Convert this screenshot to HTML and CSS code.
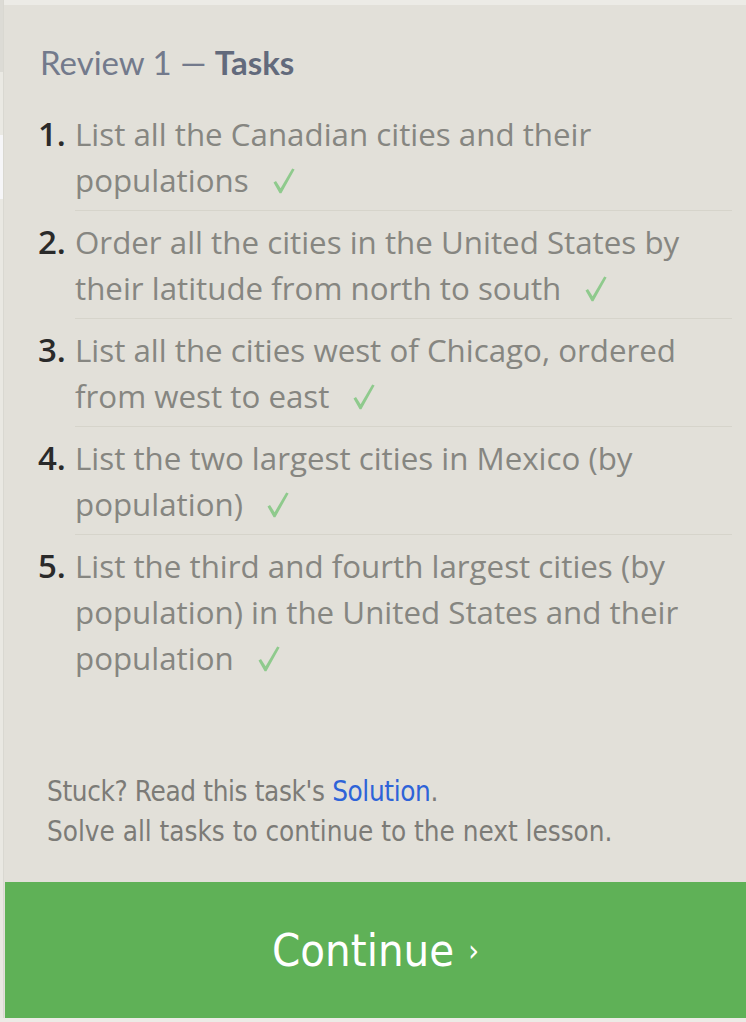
FILE: index.html
```html
<!DOCTYPE html>
<html lang="en">
<head>
<meta charset="utf-8">
<title>Review 1 — Tasks</title>
<link rel="stylesheet" href="styles.css">
</head>
<body>
<div class="page">
  <div class="rail">
    <div class="rail-a"></div>
    <div class="rail-b"></div>
    <div class="rail-c"></div>
    <div class="rail-d"></div>
  </div>
  <main class="panel">
    <h2 class="title">Review 1 — <strong>Tasks</strong></h2>
    <ol class="tasks">
      <li class="task"><span class="num">1.</span><div class="body">List all the Canadian cities and their populations<svg class="check" viewBox="0 0 22 26" width="22" height="26"><path d="M0.5 14.5 L3 13 L7.6 20.2 L19.2 0.6 L21.6 1.6 L8.4 25.2 L6.6 25.2 Z"/></svg></div></li>
      <li class="task"><span class="num">2.</span><div class="body">Order all the cities in the United States by their latitude from north to south<svg class="check" viewBox="0 0 22 26" width="22" height="26"><path d="M0.5 14.5 L3 13 L7.6 20.2 L19.2 0.6 L21.6 1.6 L8.4 25.2 L6.6 25.2 Z"/></svg></div></li>
      <li class="task"><span class="num">3.</span><div class="body">List all the cities west of Chicago, ordered from west to east<svg class="check" viewBox="0 0 22 26" width="22" height="26"><path d="M0.5 14.5 L3 13 L7.6 20.2 L19.2 0.6 L21.6 1.6 L8.4 25.2 L6.6 25.2 Z"/></svg></div></li>
      <li class="task"><span class="num">4.</span><div class="body">List the two largest cities in Mexico (by population)<svg class="check" viewBox="0 0 22 26" width="22" height="26"><path d="M0.5 14.5 L3 13 L7.6 20.2 L19.2 0.6 L21.6 1.6 L8.4 25.2 L6.6 25.2 Z"/></svg></div></li>
      <li class="task"><span class="num">5.</span><div class="body">List the third and fourth largest cities (by population) in the United States and their population<svg class="check" viewBox="0 0 22 26" width="22" height="26"><path d="M0.5 14.5 L3 13 L7.6 20.2 L19.2 0.6 L21.6 1.6 L8.4 25.2 L6.6 25.2 Z"/></svg></div></li>
    </ol>
    <div class="help">
      <p class="stuck">Stuck? Read this task's <a href="#" class="link">Solution</a>.</p>
      <p>Solve all tasks to continue to the next lesson.</p>
    </div>
    <a href="#" class="continue">Continue <span class="chev">›</span></a>
  </main>
</div>
</body>
</html>
```
FILE: styles.css
```css
html, body {
  margin: 0;
  padding: 0;
  background: #ecebe6;
}
.page {
  display: flex;
  width: 746px;
  height: 1022px;
  padding-top: 5px;
  padding-bottom: 4px;
  box-sizing: border-box;
}
.rail {
  width: 3px;
  flex: none;
  display: flex;
  flex-direction: column;
  border-right: 1px solid #d9d8d1;
  margin-top: -5px;
}
.rail-a { height: 72px; background: #dcdbd5; }
.rail-b { height: 63px; background: #eae9e3; }
.rail-c { height: 64px; background: #f6f6f8; }
.rail-d { flex: 1; background: #e9e8e2; }
.panel {
  flex: 1;
  background: #e2e0d9;
  display: flex;
  flex-direction: column;
  padding: 0 14px 0 0;
}
.title {
  margin: 37px 0 0 36px;
  font-family: "Lato", sans-serif;
  font-size: 33px;
  line-height: 40px;
  font-weight: 400;
  color: #737a8c;
}
.title strong {
  font-weight: 700;
  color: #626a7c;
}
.tasks {
  list-style: none;
  margin: 21px 0 0 0;
  padding: 0 0 0 34px;
  font-family: "Open Sans", sans-serif;
  font-size: 31.3px;
  line-height: 46px;
}
.task {
  display: flex;
}
.num {
  width: 37px;
  flex: none;
  padding-top: 8px;
  color: #2a2a2a;
  font-weight: 600;
  font-size: 33px;
}
.body {
  flex: 1;
  padding: 8px 0 7px 0;
  color: #868681;
  border-bottom: 1px solid #d6d4cb;
}
.task:last-child .body {
  border-bottom: none;
}
.check {
  margin-left: 24px;
  vertical-align: -2px;
  fill: #8fca8d;
}
.help {
  margin: 84px 0 0 0;
  padding-left: 43px;
  font-family: "DejaVu Sans Condensed", sans-serif;
  font-size: 27.6px;
  line-height: 40px;
  color: #7c7b77;
}
.help p {
  margin: 0;
}
.stuck {
  letter-spacing: -0.35px;
}
.link {
  color: #2e63d8;
  text-decoration: none;
}
.continue {
  margin: 30px -14px 0 1px;
  height: 136px;
  background: #5fb157;
  color: #ffffff;
  display: flex;
  align-items: center;
  justify-content: center;
  font-family: "DejaVu Sans Condensed", sans-serif;
  font-size: 45px;
  text-decoration: none;
}
.chev {
  font-size: 30px;
  margin-left: 14px;
}
```
